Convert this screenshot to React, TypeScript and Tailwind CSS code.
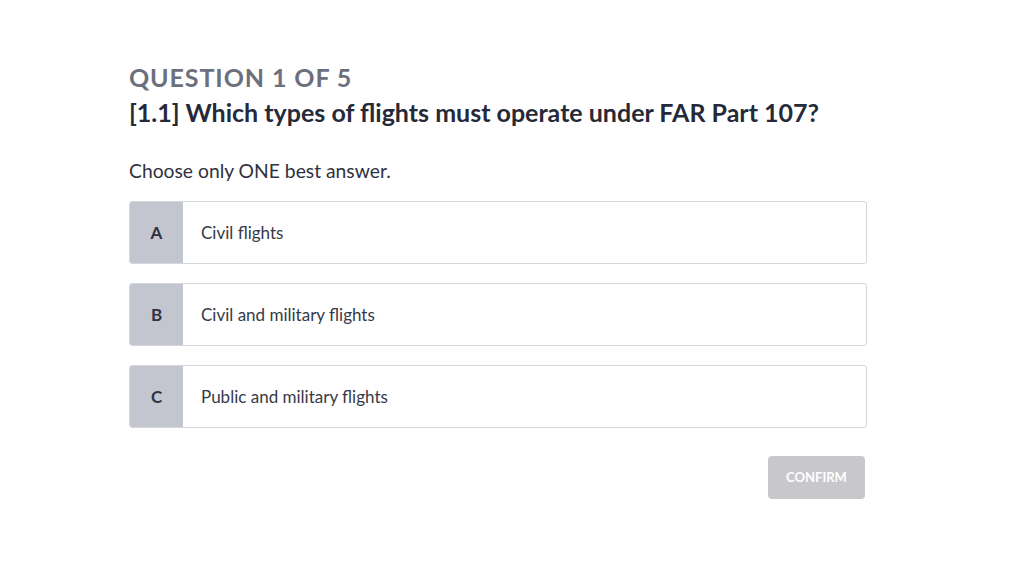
import { useState } from 'react';

const options = [
  { key: 'A', label: 'Civil flights' },
  { key: 'B', label: 'Civil and military flights' },
  { key: 'C', label: 'Public and military flights' },
];

function App() {
  const [selected, setSelected] = useState<string | null>(null);

  return (
    <div className="min-h-screen bg-white font-['Lato','Liberation_Sans',sans-serif]">
      <main className="w-[738px] ml-[129px] pt-[62px]">
        <p className="text-[25px] leading-[30px] font-bold tracking-[0.9px] text-[#6c6f7d]">
          QUESTION 1 OF 5
        </p>
        <h1 className="mt-[3px] text-[25px] leading-[34px] font-bold text-[#262a38]">
          [1.1] Which types of flights must operate under FAR Part 107?
        </h1>

        <p className="mt-[29px] text-[19.3px] leading-[26px] text-[#2f3240]">Choose only ONE best answer.</p>

        <div className="mt-[17px] flex flex-col gap-[19px]">
          {options.map((o) => (
            <button
              key={o.key}
              onClick={() => setSelected(o.key)}
              className={`flex h-[63px] w-full overflow-hidden rounded-[3px] border text-left ${
                selected === o.key ? 'border-[#8f94a6]' : 'border-[#d6d7dd]'
              }`}
            >
              <span className="flex w-[53px] items-center justify-center bg-[#c3c5cf] text-[17px] font-bold text-[#2f3240]">
                {o.key}
              </span>
              <span className="flex flex-1 items-center pl-[18px] text-[17px] text-[#363a47]">{o.label}</span>
            </button>
          ))}
        </div>

        <div className="mt-[28px] flex justify-end pr-[2px]">
          <button className="h-[43px] w-[97px] rounded-[4px] bg-[#c8c8cc] text-[13px] font-bold text-white">
            CONFIRM
          </button>
        </div>
      </main>
    </div>
  );
}

export default App;
